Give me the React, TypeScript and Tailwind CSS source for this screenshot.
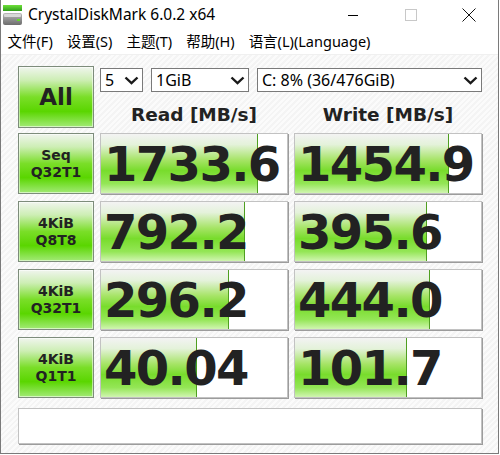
import React from "react";

// CrystalDiskMark 6.0.2 main window

const uiFont = "font-['Noto_Sans','Noto_Sans_CJK_SC',sans-serif]";
const boldFont = "font-['DejaVu_Sans',sans-serif] font-bold";

type Row = {
  top: string;
  bottom: string;
  read: string;
  write: string;
  readFill: number;
  writeFill: number;
};

const rows: Row[] = [
  { top: "Seq", bottom: "Q32T1", read: "1733.6", write: "1454.9", readFill: 157, writeFill: 154 },
  { top: "4KiB", bottom: "Q8T8", read: "792.2", write: "395.6", readFill: 144, writeFill: 132 },
  { top: "4KiB", bottom: "Q32T1", read: "296.2", write: "444.0", readFill: 128, writeFill: 135 },
  { top: "4KiB", bottom: "Q1T1", read: "40.04", write: "101.7", readFill: 96, writeFill: 112 },
];

function AppIcon() {
  return (
    <svg width="20" height="21" viewBox="0 0 20 21">
      <defs>
        <linearGradient id="gbar" x1="0" y1="0" x2="0" y2="1">
          <stop offset="0" stopColor="#6fe03a" />
          <stop offset="1" stopColor="#2f9e1a" />
        </linearGradient>
        <linearGradient id="drive" x1="0" y1="0" x2="0" y2="1">
          <stop offset="0" stopColor="#b9b9b9" />
          <stop offset="1" stopColor="#6d6d6d" />
        </linearGradient>
      </defs>
      <rect x="0" y="0" width="19" height="6" fill="url(#gbar)" />
      <rect x="0" y="8" width="19" height="12" rx="2" fill="url(#drive)" />
      <rect x="1" y="9" width="17" height="3" rx="1" fill="#d8d8d8" />
      <rect x="14" y="14" width="3" height="2" fill="#5fe024" />
    </svg>
  );
}

function Chevron() {
  return (
    <svg width="15" height="9" viewBox="0 0 15 9" className="shrink-0">
      <path d="M1.5 1.5 L7.5 7.2 L13.5 1.5" fill="none" stroke="#1a1a1a" strokeWidth="2.4" />
    </svg>
  );
}

function Select({ label, width }: { label: string; width: string }) {
  return (
    <div
      className={`${width} h-[24px] bg-white border border-[#7a7a7a] flex items-center justify-between pl-[4px] pr-[3px] ${uiFont} text-[16px] text-black leading-none`}
    >
      <span>{label}</span>
      <Chevron />
    </div>
  );
}

function GreenButton({ children, className = "" }: { children: React.ReactNode; className?: string }) {
  return (
    <div
      className={`border border-[#7d8c7b] shadow-[inset_0_0_0_1px_rgba(255,255,255,0.55)] bg-[linear-gradient(to_bottom,#f0f5ee_0%,#cdeeb4_22%,#7ade28_50%,#5ad600_74%,#a2ea76_100%)] flex flex-col items-center justify-center text-[#222] ${className}`}
    >
      {children}
    </div>
  );
}

function ValueBox({ value, fill }: { value: string; fill: number }) {
  return (
    <div className="relative h-full bg-white border border-[#c2c2c2] shadow-[1px_1px_0_#9c9c9c] overflow-hidden">
      <div
        className="absolute left-0 top-0 bottom-0 border-r border-[#4f9f20] bg-[linear-gradient(to_bottom,#f3f3f3_0%,#e4f2da_18%,#a6e466_44%,#78dc2c_62%,#94e656_84%,#d0f5b0_100%)]"
        style={{ width: fill }}
      />
      <div
        className={`relative h-full flex items-center pl-[3px] ${boldFont} text-[48px] tracking-[-1.6px] text-[#222] leading-none`}
      >
        {value}
      </div>
    </div>
  );
}

export default function App() {
  const menu = ["文件(F)", "设置(S)", "主题(T)", "帮助(H)", "语言(L)(Language)"];
  return (
    <div className="w-[500px] h-[455px] bg-white">
      <div className="w-[499px] h-[454px] border-x border-b border-[#7a7a7a] flex flex-col">
        {/* title bar */}
        <div className="h-[30px] flex items-center bg-white">
          <div className="pl-[2px] pt-[1px] w-[27px] flex items-center">
            <AppIcon />
          </div>
          <span className={`${uiFont} text-[15.5px] text-black`}>CrystalDiskMark 6.0.2 x64</span>
          <div className="ml-auto flex items-center h-full">
            <div className="w-[58px] h-full flex items-center justify-center">
              <div className="w-[10px] h-px bg-black" />
            </div>
            <div className="w-[58px] h-full flex items-center justify-center">
              <div className="w-[12px] h-[12px] border border-[#c8c8c8]" />
            </div>
            <div className="w-[58px] h-full flex items-center justify-center">
              <svg width="14" height="14" viewBox="0 0 14 14">
                <path d="M0.5 0.5 L13.5 13.5 M13.5 0.5 L0.5 13.5" stroke="#111" strokeWidth="1" />
              </svg>
            </div>
          </div>
        </div>

        {/* menu bar */}
        <div className={`h-[25px] flex items-center pl-[0px] border-b border-[#f0f0f0] ${uiFont} text-[14.5px] text-black`}>
          {menu.map((m) => (
            <span key={m} className="px-[6.5px] mr-[1px]">
              {m}
            </span>
          ))}
        </div>

        {/* main panel */}
        <div className="flex-1 pl-[17px] pr-[16px] pt-[11px] bg-[repeating-linear-gradient(135deg,#f4f4f4_0px,#f4f4f4_2px,#fbfbfb_2px,#fbfbfb_4px)]">
          <div className="grid grid-cols-[76px_188px_188px] gap-x-[6px]">
            <GreenButton className="h-[62px]">
              <span className={`${boldFont} text-[23px] leading-none`}>All</span>
            </GreenButton>
            <div className="col-span-2 flex flex-col">
              <div className="flex gap-[8px] pt-[2px]">
                <Select label="5" width="w-[43px]" />
                <Select label="1GiB" width="w-[98px]" />
                <Select label="C: 8% (36/476GiB)" width="w-[225px]" />
              </div>
              <div className="grid grid-cols-2 gap-x-[6px] mt-[12px]">
                <div className={`text-center ${boldFont} text-[18.5px] text-[#222] leading-[22px]`}>Read [MB/s]</div>
                <div className={`text-center ${boldFont} text-[18.5px] text-[#222] leading-[22px]`}>Write [MB/s]</div>
              </div>
            </div>
          </div>

          <div className="mt-[5px] flex flex-col gap-[7px]">
            {rows.map((r) => (
              <div key={r.read} className="grid grid-cols-[76px_188px_188px] gap-x-[6px] h-[61px]">
                <GreenButton className="h-full">
                  <span className={`${boldFont} text-[14px] leading-[17px]`}>{r.top}</span>
                  <span className={`${boldFont} text-[14px] leading-[17px]`}>{r.bottom}</span>
                </GreenButton>
                <ValueBox value={r.read} fill={r.readFill} />
                <ValueBox value={r.write} fill={r.writeFill} />
              </div>
            ))}
          </div>

          <div className="mt-[10px] h-[36px] bg-white border border-[#c2c2c2] shadow-[1px_1px_0_#9c9c9c]" />
        </div>
      </div>
    </div>
  );
}
